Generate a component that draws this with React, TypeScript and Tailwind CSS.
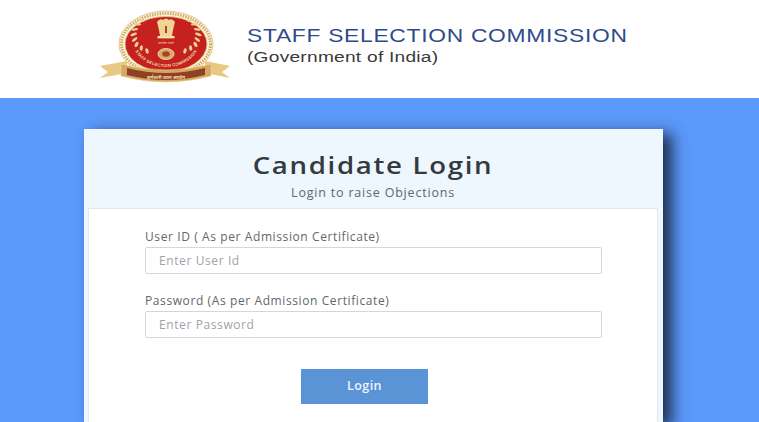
const font = "[font-family:'Open_Sans',sans-serif]";

function Laurel({ flip }: { flip?: boolean }) {
  const leaves = [
    [-33, 2, -50], [-34, -5, -30], [-33, -12, -15], [-30, -19, 5], [-26, -25, 25],
    [-31, 9, -70], [-26, 14, -85], [-20, 18, -100],
  ];
  return (
    <g transform={flip ? 'scale(-1 1)' : undefined}>
      {leaves.map(([x, y, r], i) => (
        <ellipse key={i} cx={x} cy={y} rx="3.8" ry="1.7" fill="#ecd29a" transform={`rotate(${r} ${x} ${y})`} />
      ))}
    </g>
  );
}

function Logo() {
  return (
    <svg width="130" height="76" viewBox="-65 -38 130 76" className="shrink-0">
      <defs>
        <path id="seal-arc" d="M -33 -5 A 33 25 0 0 0 33 -5" />
      </defs>
      {/* outer ring */}
      <ellipse cx="1" cy="-3" rx="47" ry="33" fill="#fbf3dc" stroke="#dcbc7c" strokeWidth="0.8" />
      <ellipse cx="1" cy="-3" rx="44.5" ry="30.5" fill="none" stroke="#cdaa62" strokeWidth="3" strokeDasharray="1.4 1.2" />
      <ellipse cx="1" cy="-3" rx="41" ry="27.5" fill="#c4211f" stroke="#e6c580" strokeWidth="0.8" />
      {/* laurel */}
      <g transform="translate(1 -9) scale(0.95 0.72)">
        <Laurel />
        <Laurel flip />
      </g>
      {/* emblem */}
      <g transform="translate(1 0)">
        <path d="M -9 -25 Q -6 -29 -3 -27 Q 0 -30 3 -27 Q 6 -29 9 -25 L 7 -17 L 6 -11 L -6 -11 L -7 -17 Z" fill="#f0d596" />
        <rect x="-8.5" y="-11" width="17" height="2.4" fill="#f5e2ae" />
        <rect x="-1" y="-21" width="2" height="7" fill="#a8442a" />
        <text x="0" y="-3" textAnchor="middle" fontSize="3.2" fill="#f6dfa6" fontFamily="'Noto Sans', sans-serif">सत्यमेव जयते</text>
        <ellipse cx="0" cy="7" rx="8" ry="5.5" fill="#d9a96b" stroke="#f3dca3" strokeWidth="0.9" />
        <ellipse cx="0" cy="7" rx="3.8" ry="2.8" fill="#a8442a" />
      </g>
      <g transform="translate(1 0)">
        <text fontSize="4.2" fontWeight="700" fill="#f3dca3" fontFamily="'Liberation Sans', sans-serif" letterSpacing="0.2">
          <textPath href="#seal-arc" startOffset="50%" textAnchor="middle">STAFF SELECTION COMMISSION</textPath>
        </text>
      </g>
      {/* ribbon */}
      <path d="M -65 19 L -38 14 L -38 26 L -65 31 L -57 25 Z" fill="#e8c883" />
      <path d="M 65 19 L 40 14 L 40 26 L 65 31 L 57 25 Z" fill="#e8c883" />
      <path d="M -44 17 Q 1 29 46 17 L 46 29 Q 1 41 -44 29 Z" fill="#d4a85f" stroke="#f0d79c" strokeWidth="0.6" />
      <path d="M -38 21 Q 1 31 40 21 L 40 28 Q 1 38 -38 28 Z" fill="#8f4026" />
      <text x="1" y="31.5" textAnchor="middle" fontSize="4.6" fontWeight="700" fill="#f6dfa6" fontFamily="'Noto Sans', sans-serif">कर्मचारी चयन आयोग</text>
    </svg>
  );
}

function Field({ label, placeholder, className }: { label: string; placeholder: string; className?: string }) {
  return (
    <div className={className}>
      <div className="whitespace-nowrap text-[12px] leading-[16px] tracking-[0.6px] text-[#61676c]">{label}</div>
      <input
        placeholder={placeholder}
        className="mt-[2px] block h-[27px] w-full rounded-[2px] border border-[#d6d6d6] bg-white px-[13px] text-[12px] tracking-[0.6px] placeholder:text-[#a0a3a6] outline-none"
      />
    </div>
  );
}

export default function App() {
  return (
    <div className={`flex h-[422px] w-[759px] flex-col overflow-hidden bg-[#5b99fb] ${font}`}>
      <header className="flex h-[98px] shrink-0 items-start bg-white pl-[100px]">
        <div className="mt-[9px]">
          <Logo />
        </div>
        <div className="ml-[17px] mt-[25px] font-['Liberation_Sans',sans-serif]">
          <div className="origin-left scale-x-[1.2] whitespace-nowrap text-[19px] leading-[22px] tracking-[0.6px] text-[#2f4a8c]">
            STAFF SELECTION COMMISSION
          </div>
          <div className="origin-left scale-x-[1.235] whitespace-nowrap text-[15.5px] leading-[20px] tracking-[0.2px] text-[#3a3a3a]">
            (Government of India)
          </div>
        </div>
      </header>

      <main className="ml-[84px] mt-[31px] flex w-[579px] flex-1 flex-col bg-[#eef6fe] pl-[4px] pr-[5px] shadow-[9px_5px_14px_rgba(25,35,60,0.9)]">
        <div className="h-[79px] shrink-0 pt-[21px] text-center">
          <h1 className="scale-x-[1.2] text-[23px] leading-[30px] tracking-[1.4px] font-semibold text-[#343a40]">Candidate Login</h1>
          <p className="mt-[5px] text-[12.5px] leading-[16px] tracking-[0.8px] text-[#61676c]">Login to raise Objections</p>
        </div>
        <div className="flex-1 border-x border-t border-[#e4e7ea] bg-white pl-[56px] pr-[55px] pt-[20px]">
          <Field label="User ID ( As per Admission Certificate)" placeholder="Enter User Id" />
          <Field className="mt-[19px]" label="Password (As per Admission Certificate)" placeholder="Enter Password" />
          <div className="mt-[31px] flex">
            <button className="ml-[156px] h-[35px] w-[127px] bg-[#5a93d6] text-[12.5px] font-semibold tracking-[0.4px] text-[#eef5fc]">
              Login
            </button>
          </div>
        </div>
      </main>
    </div>
  );
}
